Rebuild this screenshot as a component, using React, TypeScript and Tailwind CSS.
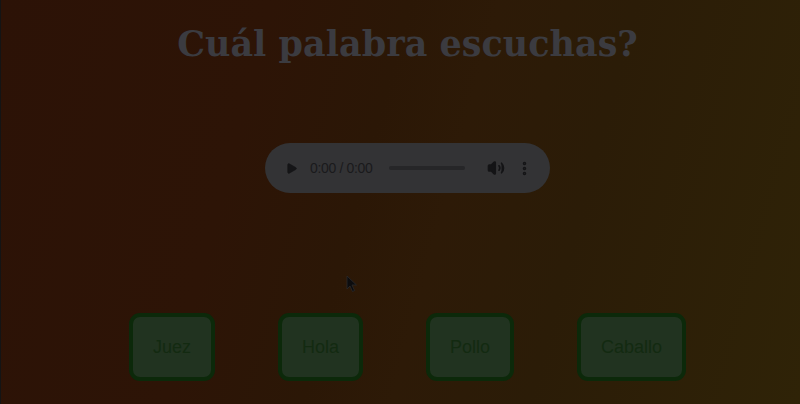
import { Play, Volume2, EllipsisVertical } from 'lucide-react'

const options = ['Juez', 'Hola', 'Pollo', 'Caballo']

export default function App() {
  return (
    <div className="relative w-[800px] h-[404px] overflow-hidden bg-[linear-gradient(105deg,#2c1206_0%,#2d1406_30%,#2b1706_45%,#2d1a07_55%,#2b1c07_70%,#2f2307_100%)] border-l border-[#141414]">
      <div className="flex flex-col items-center pl-[14px]" style={{ fontFamily: '"Liberation Sans", Arial, sans-serif' }}>
        {/* Title */}
        <h1
          className="mt-[22px] text-[35px] leading-[44px] font-bold text-[#3b3b40]"
          style={{ fontFamily: '"DejaVu Serif", Georgia, serif' }}
        >
          Cuál palabra escuchas?
        </h1>

        {/* Audio player */}
        <div className="mt-[77px] w-[285px] h-[50px] rounded-full bg-[#333335] flex items-center pl-[20px] whitespace-nowrap">
          <Play className="shrink-0 w-[13px] h-[13px] text-[#151517]" fill="#151517" strokeWidth={1} />
          <span className="shrink-0 ml-[12px] w-[63px] text-[14px] text-[#1a1a1c] tracking-tight">0:00 / 0:00</span>
          <div className="shrink-0 ml-[16px] w-[76px] h-[4px] rounded-full bg-[#262628]" />
          <Volume2 className="shrink-0 ml-[22px] w-[18px] h-[18px] text-[#141416]" fill="#141416" strokeWidth={2.2} />
          <EllipsisVertical className="shrink-0 ml-[11px] w-[17px] h-[17px] text-[#141416]" strokeWidth={3} />
        </div>

        {/* Options */}
        <div className="mt-[120px] flex gap-[63px]">
          {options.map(o => (
            <button
              key={o}
              className="h-[68px] px-5 rounded-[11px] border-4 border-[#0c290a] bg-[#213320] text-[18px] text-[#132a11]"
            >
              {o}
            </button>
          ))}
        </div>
      </div>

      {/* mouse pointer */}
      <svg className="absolute left-[345px] top-[275px]" width="12" height="18" viewBox="0 0 12 18">
        <path d="M1 1 L1 14 L4 11 L6.5 16.5 L8.5 15.5 L6 10 L10.5 10 Z" fill="#0c0c0e" stroke="#2a2a2c" strokeWidth="0.8" />
      </svg>
    </div>
  )
}
